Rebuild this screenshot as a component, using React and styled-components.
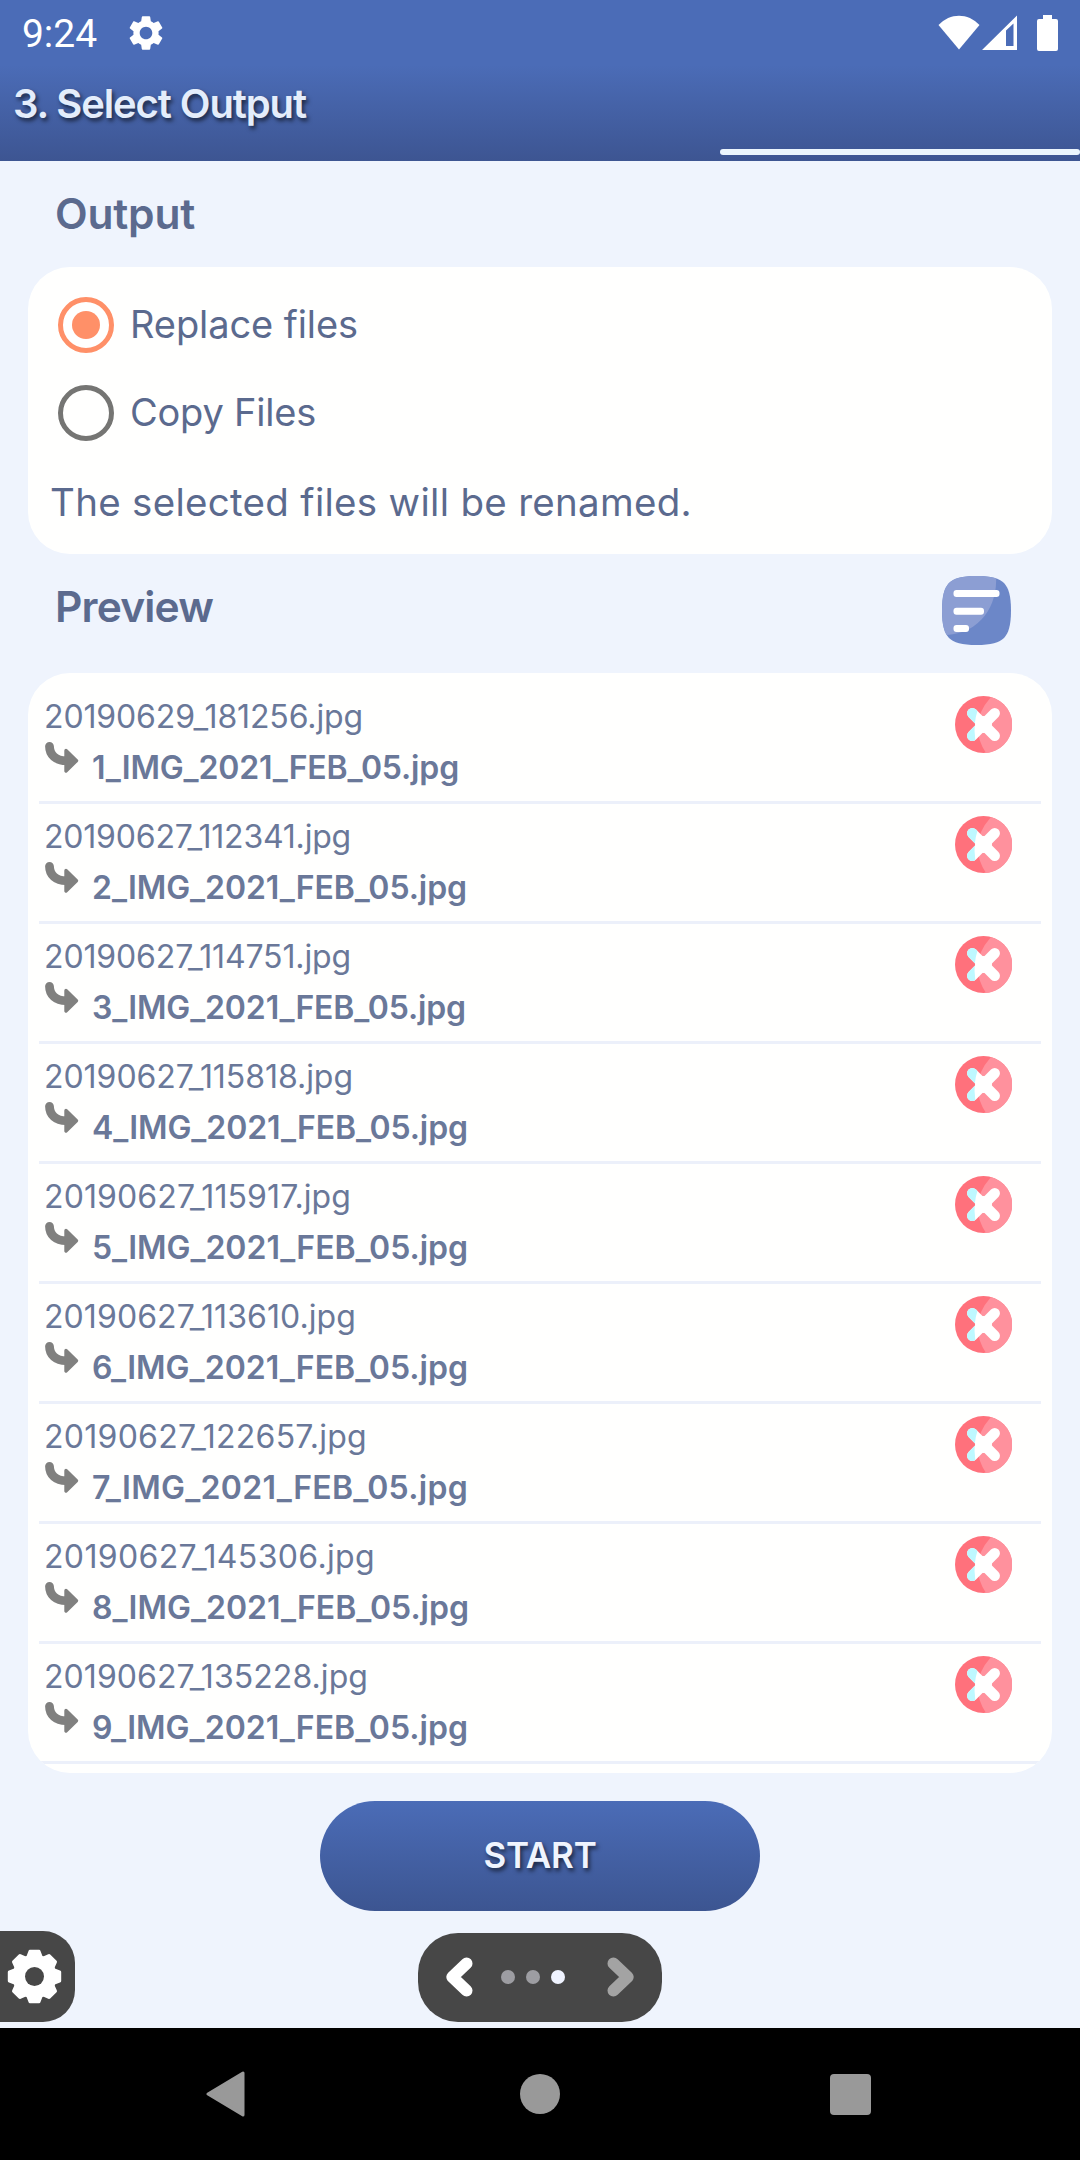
import React, { useLayoutEffect, useRef, useState } from 'react';
import styled, { createGlobalStyle } from 'styled-components';
import { MdSettings } from 'react-icons/md';

const files = [
  { from: '20190629_181256.jpg', to: '1_IMG_2021_FEB_05.jpg', fromWidth: 319, toWidth: 367 },
  { from: '20190627_112341.jpg', to: '2_IMG_2021_FEB_05.jpg', fromWidth: 307, toWidth: 375 },
  { from: '20190627_114751.jpg', to: '3_IMG_2021_FEB_05.jpg', fromWidth: 307, toWidth: 374 },
  { from: '20190627_115818.jpg', to: '4_IMG_2021_FEB_05.jpg', fromWidth: 309, toWidth: 376 },
  { from: '20190627_115917.jpg', to: '5_IMG_2021_FEB_05.jpg', fromWidth: 307, toWidth: 376 },
  { from: '20190627_113610.jpg', to: '6_IMG_2021_FEB_05.jpg', fromWidth: 312, toWidth: 376 },
  { from: '20190627_122657.jpg', to: '7_IMG_2021_FEB_05.jpg', fromWidth: 323, toWidth: 376 },
  { from: '20190627_145306.jpg', to: '8_IMG_2021_FEB_05.jpg', fromWidth: 331, toWidth: 377 },
  { from: '20190627_135228.jpg', to: '9_IMG_2021_FEB_05.jpg', fromWidth: 324, toWidth: 376 },
];

const GlobalStyle = createGlobalStyle`
  body {
    margin: 0;
    background: #eff4fd;
  }

  * {
    box-sizing: border-box;
  }

  svg {
    display: block;
    flex: none;
  }
`;

const Screen = styled.div`
  display: flex;
  flex-direction: column;
  width: 1080px;
  height: 2160px;
  overflow: hidden;
  background: #eff4fd;
  color: #5b6a8e;
  font-family: Inter, 'Noto Sans', sans-serif;
`;

const Header = styled.header`
  height: 161px;
  color: #e4edfb;
  background: linear-gradient(#4b6cb7 65px, #3d5592 161px);
`;

const StatusBar = styled.div`
  display: flex;
  align-items: center;
  height: 66px;
  padding: 0 20px 0 22px;
  color: #fff;
`;

const Clock = styled.span`
  width: 103px;
  line-height: 66px;
  padding-top: 2px;
  font-family: Roboto, sans-serif;
  font-size: 39px;
`;

const StatusIcons = styled.div`
  display: flex;
  margin-left: auto;
`;

const Title = styled.h1`
  margin: 0 0 0 13px;
  font-size: 40px;
  font-weight: 600;
  line-height: 75px;
  text-shadow: 2px 3px 4px rgba(0, 0, 0, 0.6);
`;

const Progress = styled.div`
  width: 360px;
  height: 6px;
  margin: 8px 0 0 auto;
  border-radius: 3px;
  background: #ebf5fd;
`;

const SectionHead = styled.div`
  display: flex;
  justify-content: space-between;
  align-items: flex-start;
  height: ${(props) => props.$height}px;
  padding: 0 69px 0 55px;
`;

const Heading = styled.h2`
  margin: 0;
  font-size: 42.5px;
  font-weight: 600;
  line-height: 105px;
`;

const SortButton = styled.div`
  padding-top: 22px;
`;

const Card = styled.section`
  flex: none;
  height: ${(props) => props.$height}px;
  margin: 0 28px;
  padding: ${(props) => props.$padding};
  overflow: hidden;
  border-radius: 42px;
  background: #fffffe;
`;

const Option = styled.label`
  display: flex;
  align-items: center;
  gap: 16px;
  height: 88px;
  padding-left: 30px;
  font-size: 38px;
  line-height: 46px;

  > :last-child {
    padding-bottom: 2px;
  }
`;

const Radio = styled.span`
  display: grid;
  place-items: center;
  width: 56px;
  height: 56px;
  border: 5.5px solid ${(props) => (props.$checked ? '#ff9068' : '#757573')};
  border-radius: 50%;

  &::after {
    content: '';
    width: 28px;
    height: 28px;
    border-radius: 50%;
    background: ${(props) => (props.$checked ? '#ff9068' : 'transparent')};
  }
`;

const Note = styled.p`
  margin: 0 0 0 22px;
  font-size: 38.5px;
  line-height: 91px;
`;

const FileRow = styled.div`
  display: flex;
  justify-content: space-between;
  height: 120px;
  padding: 8px 29px 0 5px;
  border-bottom: 3px solid #ecf0fa;
  color: #6a7899;
  font-size: 32px;
`;

const OldName = styled.div`
  line-height: 49px;
`;

const NewName = styled.div`
  display: flex;
  gap: 13px;
  padding-left: 1px;
  font-weight: 600;
  line-height: 54px;
`;

const RemoveButton = styled.div`
  padding-top: 4px;
`;

const StartButton = styled.div`
  flex: none;
  width: 440px;
  height: 110px;
  margin: 28px auto 20px;
  border-radius: 55px;
  background: linear-gradient(#4b6cb7, #3c5591);
  color: #eff4fe;
  font-size: 35px;
  font-weight: 600;
  line-height: 109px;
  text-align: center;
  text-shadow: 2px 3px 4px rgba(0, 0, 0, 0.6);
`;

const Controls = styled.div`
  display: grid;
  grid-template-columns: 1fr auto 1fr;
  align-items: end;
  height: 91px;
  margin-bottom: 6px;
`;

const SettingsTab = styled.div`
  width: 75px;
  height: 91px;
  padding: 18px 0 0 7px;
  border-radius: 0 32px 32px 0;
  background: #474747;
`;

const Pager = styled.div`
  display: flex;
  align-items: center;
  width: 244px;
  height: 89px;
  padding: 0 28px 1px;
  border-radius: 40px;
  background: #474747;
`;

const Dots = styled.div`
  display: flex;
  gap: 11px;
  margin: 0 42px 0 28px;
`;

const Dot = styled.span`
  width: 14px;
  height: 14px;
  border-radius: 50%;
  background: ${(props) => (props.$active ? '#eff3ff' : '#9d9da2')};
`;

const NavBar = styled.nav`
  display: grid;
  grid-template-columns: repeat(3, 312px);
  justify-content: center;
  place-items: center;
  height: 132px;
  background: #000;
`;

const Line = styled.span`
  display: inline-block;
  white-space: pre;
`;

// Spreads the letters so that the text is exactly `width` wide
const FitText = ({ width, children }) => {
  const ref = useRef(null);
  const [spacing, setSpacing] = useState(0);

  useLayoutEffect(() => {
    const natural = ref.current.getBoundingClientRect().width;
    setSpacing((width - natural) / children.length);
  }, []);

  return <Line ref={ref} style={{ letterSpacing: spacing }}>{children}</Line>;
};

const WifiIcon = () => (
  <svg width="42" height="36" viewBox="0 0 42 36" fill="#fff">
    <path d="M0.5 10C12 -2.5 30 -2.5 41.5 10L21 34.5z" />
  </svg>
);

const SignalIcon = () => (
  <svg width="39" height="36" viewBox="0 0 39 36" fill="#fff">
    <path fillRule="evenodd" d="M2 35L37 0.5V35zM26 15.5V31H33.5V8.5z" />
  </svg>
);

const BatteryIcon = () => (
  <svg width="41" height="36" viewBox="-2 0 41 36" fill="#fff">
    <path d="M22 0H31V4H35Q37 4 37 6V34Q37 36 35 36H18Q16 36 16 34V6Q16 4 18 4H22z" />
  </svg>
);

const SortIcon = () => (
  <svg width="69" height="69" viewBox="0 0 69 69">
    <defs>
      <clipPath id="sort-shape">
        <path d="M34.5 0C49 0 57.5 2.5 62 7S69 20 69 34.5S66.500 57.500 62 62S49 69 34.500 69S11.500 66.500 7 62S0 49 0 34.500S2.500 11.500 7 7S20 0 34.500 0z" />
      </clipPath>
    </defs>
    <g clipPath="url(#sort-shape)">
      <rect width="69" height="69" fill="#6c87c8" />
      <path d="M0 0H54C56 30 38 57 5 59L0 60z" fill="#8c9ed3" />
    </g>
    <g fill="#fff">
      <rect x="11.5" y="14" width="46" height="7" rx="3" />
      <rect x="11.5" y="31.7" width="30.5" height="7" rx="3" />
      <rect x="11.5" y="49" width="15.5" height="7" rx="3" />
    </g>
  </svg>
);

const RemoveIcon = () => (
  <svg width="57" height="57" viewBox="0 0 57 57">
    <defs>
      <clipPath id="cross-shade">
        <path d="M0 0H29Q13 28 24 57H0z" />
      </clipPath>
    </defs>
    <circle cx="28.5" cy="28.5" r="28.5" fill="#ff717c" />
    <path d="M36 1Q12 28 31 57A28.5 28.5 0 0 0 36 1z" fill="#ff919d" />
    <g stroke="#fff" strokeWidth="10.5" strokeLinecap="round">
      <path d="M17.3 17.3L39.7 39.7M39.7 17.3L17.3 39.7" />
      <path d="M17.3 17.3L24 24M24 33L17.3 39.7" stroke="#bdf8ff" strokeLinecap="round" clipPath="url(#cross-shade)" />
      <path d="M27 28.5H30M28.5 27V30" strokeWidth="14" />
    </g>
  </svg>
);

const RenameIcon = () => (
  <svg width="34" height="33" viewBox="0 0 34 33">
    <path d="M4.5 5.3C4.5 14 11 19.7 21 19.7" fill="none" stroke="#80807f" strokeWidth="8.8" strokeLinecap="round" />
    <path d="M21 9.5L31.5 19.7L21 30z" fill="#80807f" stroke="#80807f" strokeWidth="3.4" strokeLinejoin="round" />
  </svg>
);

const GearIcon = () => (
  <svg width="55" height="55" viewBox="-27.5 -27.5 55 55" fill="#fff">
    <circle r="22" />
    {[0, 45, 90, 135, 180, 225, 270, 315].map((angle) => (
      <path
        key={angle}
        d="M-8.5 -19L-6 -25.5Q-5.7 -26.7 -4.5 -26.7H4.5Q5.7 -26.7 6 -25.5L8.5 -19z"
        transform={`rotate(${angle})`}
      />
    ))}
    <circle r="9.5" fill="#474747" />
  </svg>
);

const ChevronIcon = ({ color, points }) => (
  <svg width="27" height="40" viewBox="0 0 27 40">
    <polyline points={points} fill="none" stroke={color} strokeWidth="12" strokeLinecap="round" strokeLinejoin="round" />
  </svg>
);

const BackIcon = () => (
  <svg width="44" height="46" viewBox="0 0 44 46">
    <path d="M2 23L37 2V44z" fill="#999" stroke="#999" strokeWidth="3" strokeLinejoin="round" />
  </svg>
);

const HomeIcon = () => (
  <svg width="40" height="40" viewBox="0 0 40 40">
    <circle cx="20" cy="20" r="20" fill="#999" />
  </svg>
);

const RecentIcon = () => (
  <svg width="44" height="41" viewBox="0 0 44 41">
    <rect width="41" height="41" rx="4" fill="#999" />
  </svg>
);

const App = () => {
  return (
    <Screen>
      <GlobalStyle />
      <Header>
        <StatusBar>
          <Clock><FitText width={75}>9:24</FitText></Clock>
          <MdSettings size={42} />
          <StatusIcons>
            <WifiIcon />
            <SignalIcon />
            <BatteryIcon />
          </StatusIcons>
        </StatusBar>
        <Title><FitText width={293}>3. Select Output</FitText></Title>
        <Progress />
      </Header>

      <SectionHead $height={106}>
        <Heading><FitText width={140}>Output</FitText></Heading>
      </SectionHead>
      <Card $height={287} $padding="14px 0 5px">
        <Option>
          <Radio $checked />
          <FitText width={228}>Replace files</FitText>
        </Option>
        <Option>
          <Radio />
          <FitText width={186}>Copy Files</FitText>
        </Option>
        <Note><FitText width={642}>The selected files will be renamed.</FitText></Note>
      </Card>

      <SectionHead $height={119}>
        <Heading><FitText width={158}>Preview</FitText></Heading>
        <SortButton><SortIcon /></SortButton>
      </SectionHead>
      <Card $height={1100} $padding="11px 11px 0">
        {files.map((file) => (
          <FileRow key={file.to}>
            <div>
              <OldName><FitText width={file.fromWidth}>{file.from}</FitText></OldName>
              <NewName>
                <RenameIcon />
                <FitText width={file.toWidth}>{file.to}</FitText>
              </NewName>
            </div>
            <RemoveButton><RemoveIcon /></RemoveButton>
          </FileRow>
        ))}
      </Card>

      <StartButton><FitText width={113}>START</FitText></StartButton>
      <Controls>
        <SettingsTab><GearIcon /></SettingsTab>
        <Pager>
          <ChevronIcon color="#fff" points="20.5,6.5 6.3,20 20.5,33.5" />
          <Dots>
            <Dot />
            <Dot />
            <Dot $active />
          </Dots>
          <ChevronIcon color="#a3a3a3" points="6.5,6.5 20.7,20 6.5,33.5" />
        </Pager>
      </Controls>
      <NavBar>
        <BackIcon />
        <HomeIcon />
        <RecentIcon />
      </NavBar>
    </Screen>
  );
};

export default App;
